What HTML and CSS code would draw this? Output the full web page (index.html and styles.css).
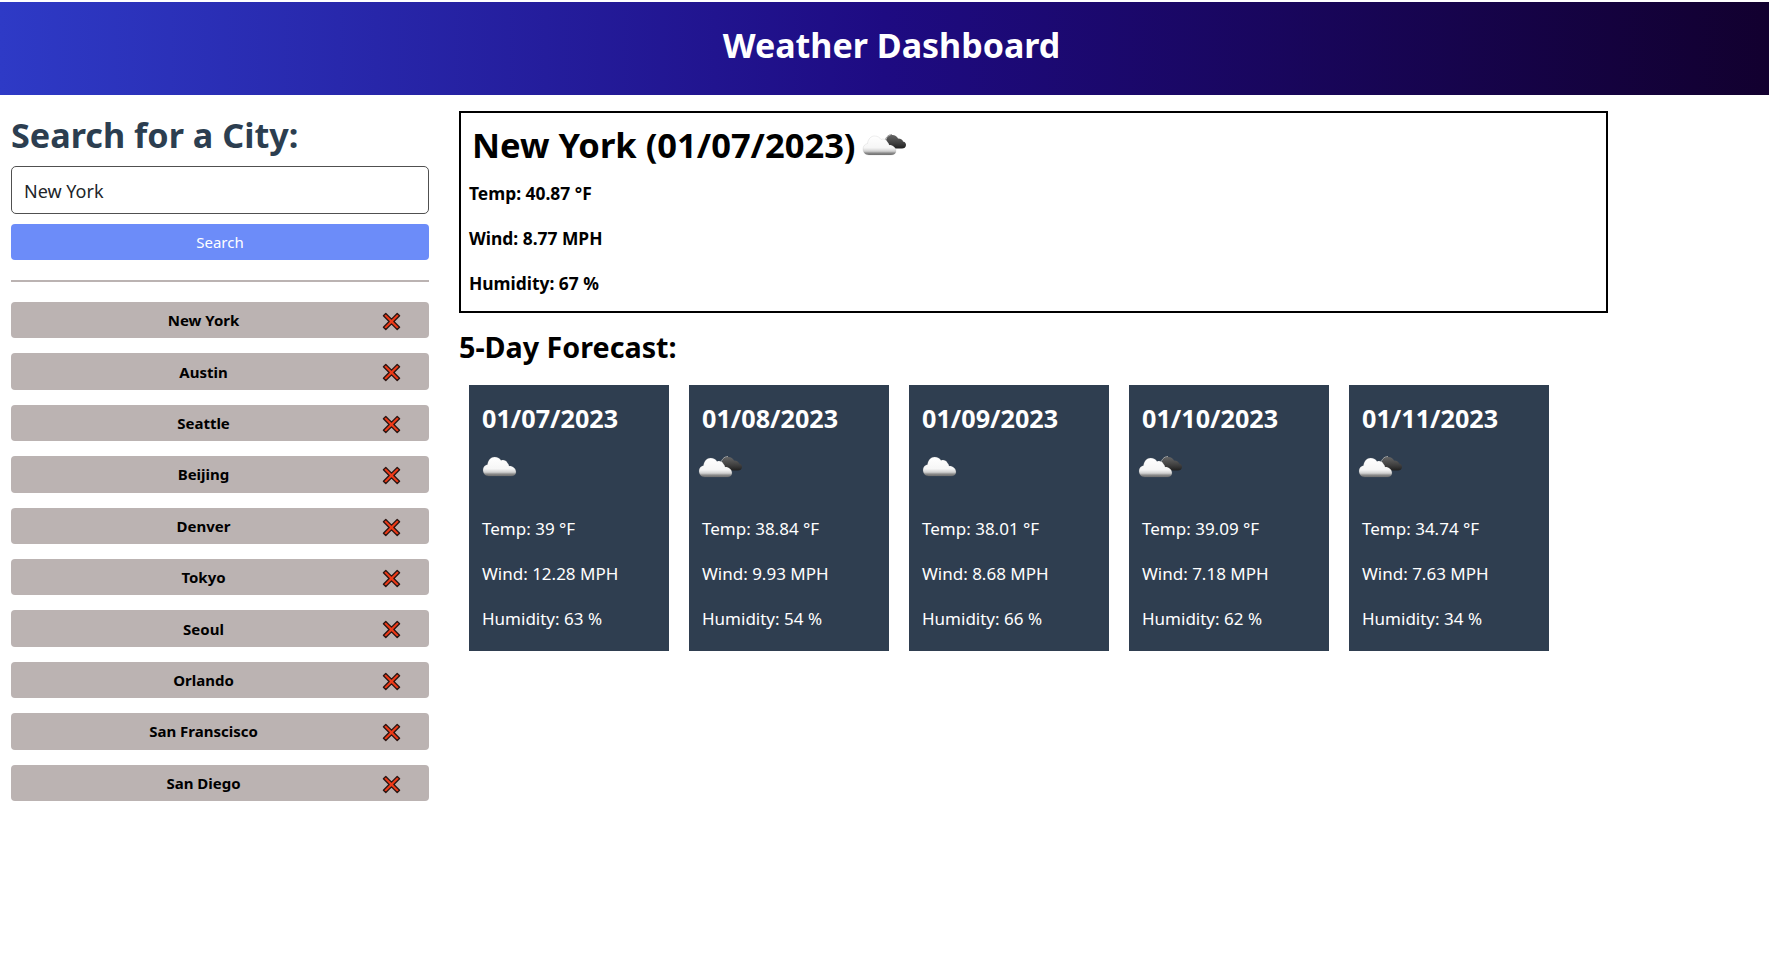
FILE: index.html
```html
<!DOCTYPE html>
<html lang="en">
<head>
    <meta charset="UTF-8">
    <meta name="viewport" content="width=device-width, initial-scale=1.0">
    <title>Weather Dashboard</title>
    <link rel="stylesheet" href="styles.css">
</head>
<body>
    <svg class="defs" width="0" height="0" aria-hidden="true">
        <defs>
            <linearGradient id="white-cloud" x1="0" y1="0" x2="0" y2="1">
                <stop offset="0" stop-color="#ffffff"/>
                <stop offset="0.62" stop-color="#f6f6f6"/>
                <stop offset="0.8" stop-color="#d0d0d0"/>
                <stop offset="0.9" stop-color="#8a8a8a"/>
                <stop offset="1" stop-color="#6e6e6e"/>
            </linearGradient>
            <linearGradient id="dark-cloud" x1="0" y1="0" x2="0" y2="1">
                <stop offset="0" stop-color="#666666"/>
                <stop offset="0.65" stop-color="#3c3c3c"/>
                <stop offset="1" stop-color="#202020"/>
            </linearGradient>
            <path id="cloud-shape" d="M6 19 C2 19 0 16 0 13 C0 10 2 8 4.5 7.5 C5 3 8 0 11.5 0 C14.5 0 17 1.5 18 3.5 C20 2.5 23 3 24.5 6 C25.5 7 26 8 26 9 C29 8.5 33 11 33 15 C33 17.5 31 19 28 19 Z"/>
            <symbol id="icon-scattered" viewBox="0 0 46 24">
                <use href="#cloud-shape" x="5" y="2" fill="url(#white-cloud)" stroke="#8c8c8c" stroke-opacity="0.3" stroke-width="0.5"/>
            </symbol>
            <symbol id="icon-broken" viewBox="0 0 46 24">
                <path d="M24 8 C24.5 3 28 1.5 31 2 C34 2.5 35.5 4 36 5.5 C39 5.5 41 7 41 8.5 C43.5 9 44 10.5 44 12 C44 14.5 42 15.5 40 15.5 L30 15.5 Z" fill="url(#dark-cloud)"/>
                <path d="M23 9 C23 5 26 1.5 30 1.5" fill="none" stroke="#a0a0a0" stroke-width="1"/>
                <use href="#cloud-shape" x="1" y="3" fill="url(#white-cloud)" stroke="#8c8c8c" stroke-opacity="0.3" stroke-width="0.5"/>
            </symbol>
            <symbol id="icon-remove" viewBox="0 0 20 20">
                <path d="M4 1.5 L10 7.5 L16 1.5 L18.5 4 L12.5 10 L18.5 16 L16 18.5 L10 12.5 L4 18.5 L1.5 16 L7.5 10 L1.5 4 Z" fill="#f03a17" stroke="#2a1512" stroke-width="1.4" stroke-linejoin="round"/>
            </symbol>
        </defs>
    </svg>

    <header class="top-bar">
        <h1>Weather Dashboard</h1>
    </header>

    <div class="page">
        <aside class="sidebar">
            <h2 class="search-title">Search for a City:</h2>
            <input class="city-input" type="text" value="New York">
            <button class="search-btn" type="button">Search</button>
            <hr class="divider">
            <ul class="city-list">
                <li class="city-item"><span class="city-name">New York</span><svg class="remove-icon"><use href="#icon-remove"/></svg></li>
                <li class="city-item"><span class="city-name">Austin</span><svg class="remove-icon"><use href="#icon-remove"/></svg></li>
                <li class="city-item"><span class="city-name">Seattle</span><svg class="remove-icon"><use href="#icon-remove"/></svg></li>
                <li class="city-item"><span class="city-name">Beijing</span><svg class="remove-icon"><use href="#icon-remove"/></svg></li>
                <li class="city-item"><span class="city-name">Denver</span><svg class="remove-icon"><use href="#icon-remove"/></svg></li>
                <li class="city-item"><span class="city-name">Tokyo</span><svg class="remove-icon"><use href="#icon-remove"/></svg></li>
                <li class="city-item"><span class="city-name">Seoul</span><svg class="remove-icon"><use href="#icon-remove"/></svg></li>
                <li class="city-item"><span class="city-name">Orlando</span><svg class="remove-icon"><use href="#icon-remove"/></svg></li>
                <li class="city-item"><span class="city-name">San Franscisco</span><svg class="remove-icon"><use href="#icon-remove"/></svg></li>
                <li class="city-item"><span class="city-name">San Diego</span><svg class="remove-icon"><use href="#icon-remove"/></svg></li>
            </ul>
        </aside>

        <main class="content">
            <section class="current">
                <h2 class="current-title">New York (01/07/2023) <svg class="current-icon"><use href="#icon-broken"/></svg></h2>
                <p>Temp: 40.87 °F</p>
                <p>Wind: 8.77 MPH</p>
                <p>Humidity: 67 %</p>
            </section>

            <h3 class="forecast-title">5-Day Forecast:</h3>
            <div class="forecast">
                <div class="day-card">
                    <h4>01/07/2023</h4>
                    <svg class="day-icon"><use href="#icon-scattered"/></svg>
                    <p>Temp: 39 °F</p>
                    <p>Wind: 12.28 MPH</p>
                    <p>Humidity: 63 %</p>
                </div>
                <div class="day-card">
                    <h4>01/08/2023</h4>
                    <svg class="day-icon"><use href="#icon-broken"/></svg>
                    <p>Temp: 38.84 °F</p>
                    <p>Wind: 9.93 MPH</p>
                    <p>Humidity: 54 %</p>
                </div>
                <div class="day-card">
                    <h4>01/09/2023</h4>
                    <svg class="day-icon"><use href="#icon-scattered"/></svg>
                    <p>Temp: 38.01 °F</p>
                    <p>Wind: 8.68 MPH</p>
                    <p>Humidity: 66 %</p>
                </div>
                <div class="day-card">
                    <h4>01/10/2023</h4>
                    <svg class="day-icon"><use href="#icon-broken"/></svg>
                    <p>Temp: 39.09 °F</p>
                    <p>Wind: 7.18 MPH</p>
                    <p>Humidity: 62 %</p>
                </div>
                <div class="day-card">
                    <h4>01/11/2023</h4>
                    <svg class="day-icon"><use href="#icon-broken"/></svg>
                    <p>Temp: 34.74 °F</p>
                    <p>Wind: 7.63 MPH</p>
                    <p>Humidity: 34 %</p>
                </div>
            </div>
        </main>
    </div>
</body>
</html>
```

FILE: styles.css
```css
body {
    margin: 0;
    padding-top: 2px;
    background-color: #ffffff;
    color: #000000;
    font-family: "Noto Sans", "Open Sans", sans-serif;
    font-size: 16px;
    overflow-x: hidden;
}
.defs {
    display: block;
    height: 0;
}
.top-bar {
    height: 93px;
    box-sizing: border-box;
    display: flex;
    justify-content: center;
    align-items: center;
    padding: 0 0 7px 14px;
    background: linear-gradient(90deg, #2e3ac6 0%, #1e0b82 50%, #12002f 100%);
}
.top-bar h1 {
    margin: 0;
    color: #ffffff;
    font-size: 34px;
    font-weight: 700;
}
.page {
    display: flex;
    align-items: flex-start;
    padding: 16px 0 0 11px;
    gap: 30px;
}
.sidebar {
    width: 418px;
    flex-shrink: 0;
}
.search-title {
    margin: 0 0 7px;
    color: #2c3e50;
    font-size: 34.2px;
    font-weight: 700;
    line-height: 48px;
}
.city-input {
    display: block;
    width: 100%;
    height: 48px;
    box-sizing: border-box;
    padding: 2px 12px 0;
    border: 1px solid #505050;
    border-radius: 5px;
    font-family: inherit;
    font-size: 18px;
    color: #212529;
}
.search-btn {
    display: block;
    width: 100%;
    height: 36px;
    margin-top: 10px;
    border: none;
    border-radius: 4px;
    background-color: #6c8cf9;
    color: #ffffff;
    font-family: inherit;
    font-size: 15px;
}
.divider {
    height: 2px;
    margin: 20px 0;
    border: none;
    background-color: #bbb3b2;
}
.city-list {
    margin: 0;
    padding: 0;
    list-style: none;
    display: flex;
    flex-direction: column;
    gap: 15px;
}
.city-item {
    position: relative;
    height: 36.4px;
    display: flex;
    justify-content: center;
    align-items: center;
    padding-right: 33px;
    border-radius: 4px;
    background-color: #bbb3b2;
    font-size: 15px;
    font-weight: 700;
}
.remove-icon {
    position: absolute;
    right: 28px;
    top: 10px;
    width: 19px;
    height: 19px;
}
.content {
    width: 1149px;
    flex-shrink: 0;
}
.current {
    box-sizing: border-box;
    height: 202px;
    padding: 9px 8px 0;
    border: 2px solid #000000;
}
.current-title {
    display: flex;
    align-items: center;
    gap: 6px;
    margin: 0 0 15px 3px;
    font-size: 34.5px;
    font-weight: 700;
    line-height: 46px;
}
.current p {
    margin: 0 0 24px;
    font-size: 17.4px;
    font-weight: 700;
    line-height: 21px;
}
.current-icon {
    width: 46px;
    height: 24px;
}
.forecast-title {
    margin: 13px 0 17px;
    font-size: 28.7px;
    font-weight: 700;
    line-height: 42px;
}
.forecast {
    display: flex;
    gap: 20px;
    padding-left: 10px;
}
.day-card {
    box-sizing: border-box;
    width: 200px;
    height: 266px;
    padding: 16px 13px 0;
    background-color: #2f3e50;
    color: #ffffff;
}
.day-card h4 {
    margin: 0;
    font-size: 25.2px;
    font-weight: 700;
    line-height: 34px;
}
.day-card p {
    margin: 0 0 24px;
    font-size: 17px;
    line-height: 21px;
}
.day-icon {
    display: block;
    width: 46px;
    height: 24px;
    margin: 20px 0 39px -4px;
}
```
